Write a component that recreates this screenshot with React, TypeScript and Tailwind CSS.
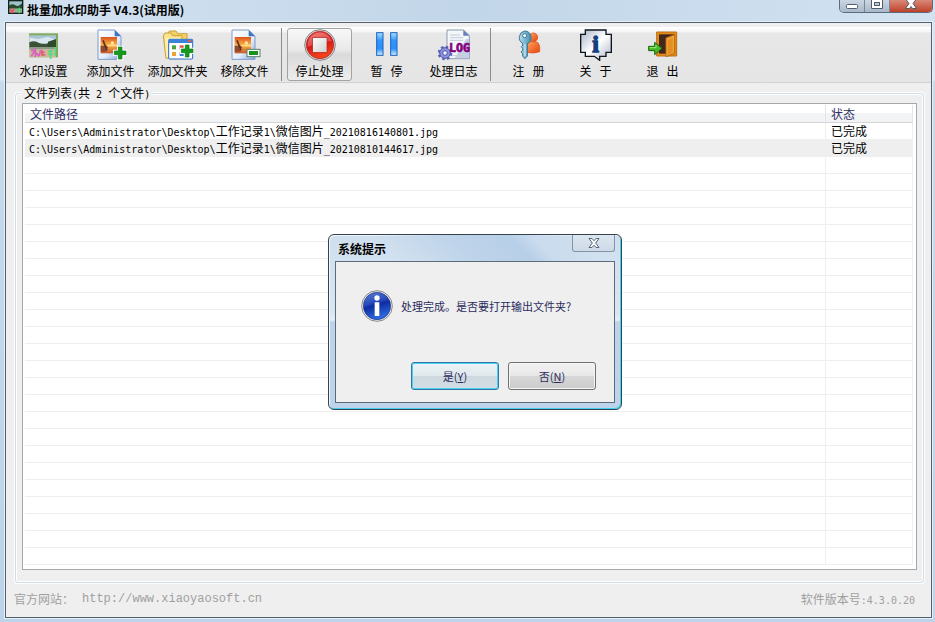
import type { ReactNode } from "react";

const files = [
  { path: "C:\\Users\\Administrator\\Desktop\\工作记录1\\微信图片_20210816140801.jpg", status: "已完成" },
  { path: "C:\\Users\\Administrator\\Desktop\\工作记录1\\微信图片_20210810144617.jpg", status: "已完成" },
];
const EMPTY_ROWS = 24;

/* Latin runs are monospaced at half the width of a Chinese character. */
function Mixed({ text }: { text: string }) {
  return (
    <>
      {text.split(/([\x20-\x7e]+)/).map((part, i) =>
        i % 2 ? (
          <span key={i} className="whitespace-pre font-['DejaVu_Sans_Mono','Liberation_Mono',monospace] text-[10px] leading-none">
            {part}
          </span>
        ) : (
          part
        ),
      )}
    </>
  );
}

function Icon({ children }: { children: ReactNode }) {
  return (
    <svg viewBox="0 0 96 96" className="size-8 shrink-0" aria-hidden="true">
      {children}
    </svg>
  );
}

function Scenery() {
  return (
    <>
      <rect x="3" y="13" width="87" height="72" fill="#7fa862" />
      <rect x="4" y="20" width="80" height="65" fill="#d9e8ef" />
      <path d="M4 20h80v12L60 24 30 30 4 26z" fill="#a9c4d6" />
      <path d="M4 40q16-8 29 2 12 6 51-4v18H4z" fill="#3c5236" />
      <path d="M60 38l24-8v26H58z" fill="#2f4a2a" />
      <rect x="4" y="54" width="80" height="8" fill="#8c9a86" />
      <rect x="4" y="61" width="80" height="24" fill="#cdbb98" />
      <path d="M8 64h12L10 82M22 58v26M22 70l12 12M38 62l-4 18" stroke="#d95fc0" strokeWidth="5" fill="none" />
      <path d="M42 64v14h10M42 70h8" stroke="#e9537b" strokeWidth="5" fill="none" />
      <path d="M60 68l14-4M60 76h14M68 62v28M82 54v26" stroke="#4fdc84" strokeWidth="5" fill="none" />
    </>
  );
}

function PhotoPage() {
  return (
    <>
      <defs>
        <linearGradient id="page" x1="0" y1="0" x2="1" y2="1">
          <stop offset="0" stopColor="#ffffff" />
          <stop offset="0.6" stopColor="#e4eefc" />
          <stop offset="1" stopColor="#7fa3dc" />
        </linearGradient>
        <linearGradient id="sunset" x1="0" y1="0" x2="0" y2="1">
          <stop offset="0" stopColor="#d9541e" />
          <stop offset="0.5" stopColor="#ffb347" />
          <stop offset="1" stopColor="#c8582a" />
        </linearGradient>
      </defs>
      <path d="M9 3h50l19 19v69H9z" fill="url(#page)" stroke="#7f9bcc" strokeWidth="3" />
      <path d="M59 3v19h19z" fill="#3f74c4" />
      <rect x="17" y="24" width="49" height="49" fill="url(#sunset)" />
      <path d="M40 47h26v5H36z" fill="#ffe28a" />
      <path d="M17 50h18l6 8-10-2 4 12H17z" fill="#8f4a30" />
      <path d="M24 34l12 30" stroke="#5a2f25" strokeWidth="5" />
      <circle cx="52" cy="42" r="5" fill="#ffe9a0" />
    </>
  );
}

function Plus() {
  return (
    <>
      <path d="M70 54h11v12h12v11H81v13H70V77H58V66h12z" fill="#fff" stroke="#fff" strokeWidth="8" />
      <path d="M70 54h11v12h12v11H81v13H70V77H58V66h12z" fill="#149a1f" stroke="#0c7a17" strokeWidth="2" />
    </>
  );
}

function FolderIcon() {
  return (
    <Icon>
      <path d="M18 14l4-8h20l5 8h28v58l-57 4z" fill="#f5d164" stroke="#c9a03a" strokeWidth="3" />
      <path d="M4 20l5-8h18l5 8h28v60l-48 8z" fill="#fbe38c" stroke="#c9a03a" strokeWidth="3" />
      <path d="M9 26h46v56l-42 3z" fill="#fdf0b0" />
      <rect x="20" y="31" width="72" height="59" rx="3" fill="#fff" stroke="#246ac2" strokeWidth="3" />
      <path d="M20 31h72v11H20z" fill="#3b82db" />
      <rect x="78" y="33" width="9" height="6" fill="#e95c3a" />
      <path d="M30 49h12v12H30z" fill="#49a33f" />
      <path d="M53 49h12v12H53z" fill="#da5945" />
      <path d="M30 69h12v12H30z" fill="#e9a236" />
      <path d="M53 69h12v12H53z" fill="#3e7fd0" />
      <g transform="translate(0 -6)">
        <Plus />
      </g>
    </Icon>
  );
}

function StopIcon() {
  return (
    <Icon>
      <defs>
        <linearGradient id="stop" x1="0" y1="0" x2="0.3" y2="1">
          <stop offset="0" stopColor="#f0635a" />
          <stop offset="0.5" stopColor="#d61212" />
          <stop offset="1" stopColor="#f4431c" />
        </linearGradient>
        <linearGradient id="stopSquare" x1="0" y1="0" x2="1" y2="1">
          <stop offset="0" stopColor="#ffffff" />
          <stop offset="1" stopColor="#cfcfcb" />
        </linearGradient>
      </defs>
      <circle cx="48" cy="48" r="46" fill="#dcdcdc" stroke="#858585" strokeWidth="3" />
      <circle cx="48" cy="48" r="41" fill="url(#stop)" stroke="#a61b1b" strokeWidth="2" />
      <path d="M11 42A38 38 0 0 1 84 36Q50 38 11 54z" fill="#fff" opacity="0.25" />
      <rect x="26" y="26" width="43" height="44" fill="url(#stopSquare)" stroke="#b52020" strokeWidth="2" />
    </Icon>
  );
}

function PauseIcon() {
  return (
    <Icon>
      <defs>
        <linearGradient id="bar" x1="0" y1="0" x2="0" y2="1">
          <stop offset="0" stopColor="#a8e0ff" />
          <stop offset="0.35" stopColor="#2f97fa" />
          <stop offset="0.7" stopColor="#2a90fa" />
          <stop offset="1" stopColor="#d4f3ff" />
        </linearGradient>
      </defs>
      <rect x="17" y="11" width="19" height="68" fill="url(#bar)" stroke="#1b5fc4" strokeWidth="3" />
      <rect x="59" y="11" width="19" height="68" fill="url(#bar)" stroke="#1b5fc4" strokeWidth="3" />
    </Icon>
  );
}

function LogIcon() {
  return (
    <Icon>
      <path d="M27 3h50l17 17v69H27z" fill="#f3f6fb" stroke="#8e9aae" strokeWidth="3" />
      <path d="M84 30h9v58H50z" fill="#c3d0e4" />
      <path d="M76 3v17h18z" fill="#5f82b8" />
      <path d="M36 18h30M36 26h40M36 34h40M36 80h40" stroke="#c3cad4" strokeWidth="3" />
      <circle cx="21" cy="72" r="19" fill="none" stroke="#5b63b8" strokeWidth="6" strokeDasharray="8 6.9" />
      <circle cx="21" cy="72" r="16" fill="#8b93de" stroke="#4e55a8" strokeWidth="3" />
      <circle cx="21" cy="72" r="7" fill="#eef0fb" stroke="#4e55a8" strokeWidth="3" />
      <text x="33" y="70" fontSize="35" fontWeight="700" fill="#84007e" stroke="#84007e" strokeWidth="2" fontFamily="DejaVu Sans Mono, monospace">
        LOG
      </text>
    </Icon>
  );
}

function RegisterIcon() {
  return (
    <Icon>
      <defs>
        <linearGradient id="person" x1="0" y1="0" x2="1" y2="1">
          <stop offset="0" stopColor="#ffa765" />
          <stop offset="1" stopColor="#e8430a" />
        </linearGradient>
        <linearGradient id="key" x1="0" y1="0" x2="1" y2="0">
          <stop offset="0" stopColor="#b7dced" />
          <stop offset="1" stopColor="#428eae" />
        </linearGradient>
      </defs>
      <path d="M41 70V49q2-10 12-11h16q9 2 11 15v15q-20 7-39 2z" fill="url(#person)" stroke="#db480e" strokeWidth="2" />
      <circle cx="61" cy="25" r="13" fill="url(#person)" stroke="#db480e" strokeWidth="2" />
      <path d="M35 6a20 20 0 0 1 8 38v37l-7 8-7-7v-8l-5-5 5-5v-6l-4-5 4-4v-6A20 20 0 0 1 35 6z" fill="url(#key)" stroke="#347694" strokeWidth="3" />
      <path d="M36 45v36" stroke="#e4f5fb" strokeWidth="3" />
      <circle cx="35" cy="20" r="6" fill="#fff" stroke="#347694" strokeWidth="3" />
    </Icon>
  );
}

function AboutIcon() {
  return (
    <Icon>
      <defs>
        <linearGradient id="plate" x1="0" y1="0" x2="1" y2="1">
          <stop offset="0" stopColor="#a7b4c8" />
          <stop offset="0.5" stopColor="#ffffff" />
          <stop offset="1" stopColor="#aab4c6" />
        </linearGradient>
      </defs>
      <path d="M16 3h62v13h16v54H78v12H59v12L43 82H16V70H2V16h14z" fill="url(#plate)" stroke="#10151d" strokeWidth="4" />
      <text x="47" y="69" textAnchor="middle" fontSize="72" fontWeight="700" fill="#123f7d" stroke="#123f7d" strokeWidth="4" fontFamily="Liberation Serif, serif">
        i
      </text>
    </Icon>
  );
}

function ExitIcon() {
  return (
    <Icon>
      <path d="M29 9h60v72H29z" fill="#e88a16" stroke="#b76f14" strokeWidth="3" />
      <path d="M36 16h46v58H36z" fill="#43261c" />
      <path d="M57 27l26-10v56l-26 10z" fill="#f0a137" stroke="#b76f14" strokeWidth="3" />
      <path d="M63 33l14-5v44l-14 5z" fill="#e38f22" />
      <path d="M5 52h18V40l22 18-22 19V65H5z" fill="#48b828" stroke="#14660f" strokeWidth="3" />
      <path d="M8 56h19v-8" stroke="#a9e57c" strokeWidth="3" fill="none" />
    </Icon>
  );
}

function ToolButton({ label, icon, active }: { label: string; icon: ReactNode; active?: boolean }) {
  return (
    <button
      type="button"
      className={
        "mx-px flex w-[65px] shrink-0 flex-col items-center gap-0.5 rounded-[3px] border pb-px text-xs leading-4 whitespace-pre " +
        (active
          ? "border-[#a3a3a3] bg-[linear-gradient(to_bottom,#f8f8f8_0,#e9e9e9_40%,#dadada_50%,#ededed_100%)]"
          : "border-transparent")
      }
    >
      {icon}
      {label}
    </button>
  );
}

function Separator() {
  return <div className="mr-1 ml-[3px] w-px shrink-0 self-stretch bg-[#8c8c8c]" />;
}

function TitleBar() {
  return (
    <header className="flex h-[22px] items-start bg-linear-to-r from-[#d3e2f1] via-[#c2d6e9] to-[#d2e2f1] pr-0.5 pl-2">
      <svg viewBox="0 0 96 96" className="size-4 shrink-0" aria-hidden="true">
        <rect x="0" y="0" width="92" height="84" fill="#10241a" />
        <rect x="8" y="8" width="76" height="30" fill="#9fc0cd" />
        <path d="M8 32q20-14 36 0t40-12v30H8z" fill="#29492c" />
        <rect x="8" y="50" width="76" height="26" fill="#a3a991" />
        <path d="M12 56l20 20M20 78l16-24" stroke="#f04a6c" strokeWidth="9" />
        <path d="M54 58h26M68 46v34" stroke="#41db77" strokeWidth="9" />
      </svg>
      <h1 className="ml-[3px] flex-1 text-xs leading-5 font-bold">批量加水印助手 V4.3(试用版)</h1>
      <div className="flex h-[13px] overflow-hidden rounded-b-[5px] border border-t-0 border-[#5c6b7b]">
        <button type="button" aria-label="最小化" className="flex w-[25px] justify-center border-r border-[#7b8999] bg-linear-to-b from-[#cbd6e2] to-[#a9b9ca]">
          <svg viewBox="0 0 14 12" className="h-3 w-3.5">
            <rect x="1.5" y="4.5" width="11" height="4" rx="1" fill="#fff" stroke="#525c6b" />
          </svg>
        </button>
        <button type="button" aria-label="最大化" className="flex w-[25px] justify-center border-r border-[#7b8999] bg-linear-to-b from-[#cbd6e2] to-[#a9b9ca]">
          <svg viewBox="0 0 14 12" className="h-3 w-3.5">
            <path d="M1.500 -1V8.500H12.500V-1z" fill="#fff" stroke="#525c6b" />
            <rect x="4.500" y="2.500" width="5" height="3" fill="#b9c6d4" stroke="#525c6b" />
          </svg>
        </button>
        <button type="button" aria-label="关闭" className="flex w-[42px] justify-center bg-linear-to-b from-[#d98877] to-[#bd3f28]">
          <svg viewBox="0 0 14 12" className="h-3 w-3.5">
            <path d="M1.500 -1l3.500 4.500L1.500 8.500h4L7 6.500 8.500 8.500h4L9 3.500 12.500 -1z" fill="#fff" stroke="#525c6b" />
          </svg>
        </button>
      </div>
    </header>
  );
}

function Toolbar() {
  return (
    <nav className="border-b border-[#d2d2d2] bg-[#efefef] pt-1">
      <div className="flex items-stretch bg-[linear-gradient(to_bottom,#ffffff_0,#f4f4f4_5px,#e7e7e7_6px,#e5e5e5_100%)] pt-px pb-px pl-1">
        <ToolButton label="水印设置" icon={<Icon><Scenery /></Icon>} />
        <ToolButton label="添加文件" icon={<Icon><PhotoPage /><Plus /></Icon>} />
        <ToolButton label="添加文件夹" icon={<FolderIcon />} />
        <ToolButton
          label="移除文件"
          icon={
            <Icon>
              <PhotoPage />
              <rect x="54" y="61" width="39" height="22" fill="#fff" stroke="#5d8064" strokeWidth="3" />
              <rect x="60" y="66" width="27" height="12" fill="#16921f" />
            </Icon>
          }
        />
        <Separator />
        <ToolButton label="停止处理" icon={<StopIcon />} active />
        <ToolButton label="暂   停" icon={<PauseIcon />} />
        <ToolButton label="处理日志" icon={<LogIcon />} />
        <Separator />
        <ToolButton label="注   册" icon={<RegisterIcon />} />
        <ToolButton label="关   于" icon={<AboutIcon />} />
        <ToolButton label="退   出" icon={<ExitIcon />} />
      </div>
    </nav>
  );
}

function FileTable() {
  const cell = "h-[17px] border-r border-b border-[#efefef] p-0 pl-1 leading-4";
  const head = "h-[18px] border-r border-b border-r-[#e3e6e9] border-b-[#d5d5d5] p-0 pl-[5px] leading-4 font-normal";
  return (
    <div className="border border-[#a3a8ac] bg-white pt-px pr-[3px] pb-1 pl-0.5">
      <table className="w-full table-fixed border-separate border-spacing-0 text-left text-xs whitespace-nowrap">
        <thead>
          <tr className="bg-[linear-gradient(to_bottom,#ffffff_45%,#f4f5f7_46%,#f0f2f4_100%)] text-[#2f2f63]">
            <th scope="col" className={head}>
              文件路径
            </th>
            <th scope="col" className={head + " w-[87px]"}>
              状态
            </th>
          </tr>
        </thead>
        <tbody>
          {files.map((file, i) => (
            <tr key={file.path} className={i % 2 ? "bg-[#efefef]" : "bg-white"}>
              <td className={cell}>
                <div className="h-4">
                  <Mixed text={file.path} />
                </div>
              </td>
              <td className={cell}>
                <div className="h-4 pl-px">{file.status}</div>
              </td>
            </tr>
          ))}
          {Array.from({ length: EMPTY_ROWS }, (_, i) => (
            <tr key={i}>
              <td className={cell} />
              <td className={cell} />
            </tr>
          ))}
        </tbody>
      </table>
    </div>
  );
}

function ConfirmDialog() {
  return (
    <div
      role="dialog"
      aria-labelledby="dialog-title"
      className="absolute top-[234px] left-[328px] w-[294px] rounded-md border border-[#36434e] bg-[linear-gradient(to_bottom,#cfdfee_0,#d9e6f2_45%,#e4edf5_49%,#bdd3e9_50%,#bed4ea_100%)] px-1.5 pb-1.5 shadow-[inset_1px_1px_0_#eef6fc,inset_-1px_-1px_0_#3fd0f2]"
    >
      <div className="flex h-[26px] items-start bg-[linear-gradient(45deg,#d3e2f000_0,#d3e2f000_20%,#bfd4ea_45%,#b7cfe8_65%,#c9dbed_72%,#d3e2f000_90%)]">
        <h2 id="dialog-title" className="mt-1.5 ml-[3px] flex-1 text-xs leading-4 font-bold">
          系统提示
        </h2>
        <button
          type="button"
          aria-label="关闭"
          className="flex h-[17px] w-[43px] items-center justify-center rounded-b-[3px] border border-t-0 border-[#8594a5] bg-linear-to-b from-[#dce6f0] to-[#cddae7]"
        >
          <svg viewBox="0 0 12 10" className="h-2.5 w-3">
            <path d="M1 0.500h3L6 2.700 8 0.500h3L7.700 5 11 9.500H8L6 7.300 4 9.500H1L4.300 5z" fill="#f7f9fb" stroke="#5a6573" />
          </svg>
        </button>
      </div>
      <div className="border border-[#5c6b7a] bg-[#efefef] pt-7 pr-[18px] pb-3 pl-[25px] text-[11px] text-[#2b2b5c]">
        <div className="flex items-center gap-2">
          <svg viewBox="0 0 96 96" className="size-8 shrink-0" aria-hidden="true">
            <defs>
              <linearGradient id="info" x1="0" y1="0" x2="0.3" y2="1">
                <stop offset="0" stopColor="#5e83d6" />
                <stop offset="0.45" stopColor="#2749ba" />
                <stop offset="0.55" stopColor="#0e2ca4" />
                <stop offset="1" stopColor="#2e68dc" />
              </linearGradient>
            </defs>
            <circle cx="48" cy="48" r="46" fill="#f3f3f3" stroke="#878787" strokeWidth="3" />
            <circle cx="48" cy="48" r="41" fill="url(#info)" stroke="#1b3186" strokeWidth="2" />
            <circle cx="48" cy="24" r="8" fill="#fff" />
            <rect x="41" y="37" width="14" height="41" rx="1" fill="#fff" />
          </svg>
          <p className="whitespace-nowrap">处理完成。是否要打开输出文件夹?</p>
        </div>
        <div className="mt-10 flex justify-end gap-[9px]">
          <button
            type="button"
            className="h-7 w-[88px] rounded-[3px] border border-[#3176a5] bg-[linear-gradient(to_bottom,#edf3f6_0,#e1e9ed_48%,#ced8de_50%,#d3dfe5_100%)] shadow-[inset_0_0_0_1px_#48d1f3]"
          >
            是(<u>Y</u>)
          </button>
          <button
            type="button"
            className="h-7 w-[88px] rounded-[3px] border border-[#707070] bg-[linear-gradient(to_bottom,#f2f2f2_0,#e8e8e8_48%,#d7d7d7_50%,#cccccc_100%)] shadow-[inset_0_0_0_1px_#f6f6f6]"
          >
            否(<u>N</u>)
          </button>
        </div>
      </div>
    </div>
  );
}

export default function App() {
  return (
    <div className="relative flex min-h-screen flex-col bg-[linear-gradient(to_bottom,#d3e2f1_0,#dce8f3_80px,#c7daeb_82px,#bcd3ea_100%)] pb-1 font-['Noto_Sans_CJK_SC',sans-serif] text-xs text-black">
      <TitleBar />
      <div className="mr-[3px] ml-[5px] flex flex-1 flex-col border border-[#54606d] bg-[#efefef] shadow-[0_0_0_1px_#e5f0f9]">
        <Toolbar />
        <main className="flex-1 pt-0.5 pr-[7px] pl-[9px]">
          <fieldset className="min-w-0 rounded-[3px] border border-[#cfdce8] px-1.5 pt-0.5 pb-3 shadow-[0_0_0_1px_#fff,inset_0_0_0_1px_#fff]">
            <legend className="relative h-4 bg-[#efefef] px-0.5 leading-4">
              <Mixed text="文件列表(共 2 个文件)" />
            </legend>
            <FileTable />
          </fieldset>
        </main>
        <footer className="flex h-[34px] items-center justify-between pr-4 pb-0.5 pl-2 text-[#a0a0a0]">
          <div className="flex items-center">
            <span>官方网站：</span>
            <a href="http://www.xiaoyaosoft.cn" className="ml-2 font-['Liberation_Mono',monospace]">
              http://www.xiaoyaosoft.cn
            </a>
          </div>
          <span>
            <Mixed text="软件版本号:4.3.0.20" />
          </span>
        </footer>
      </div>
      <ConfirmDialog />
    </div>
  );
}
